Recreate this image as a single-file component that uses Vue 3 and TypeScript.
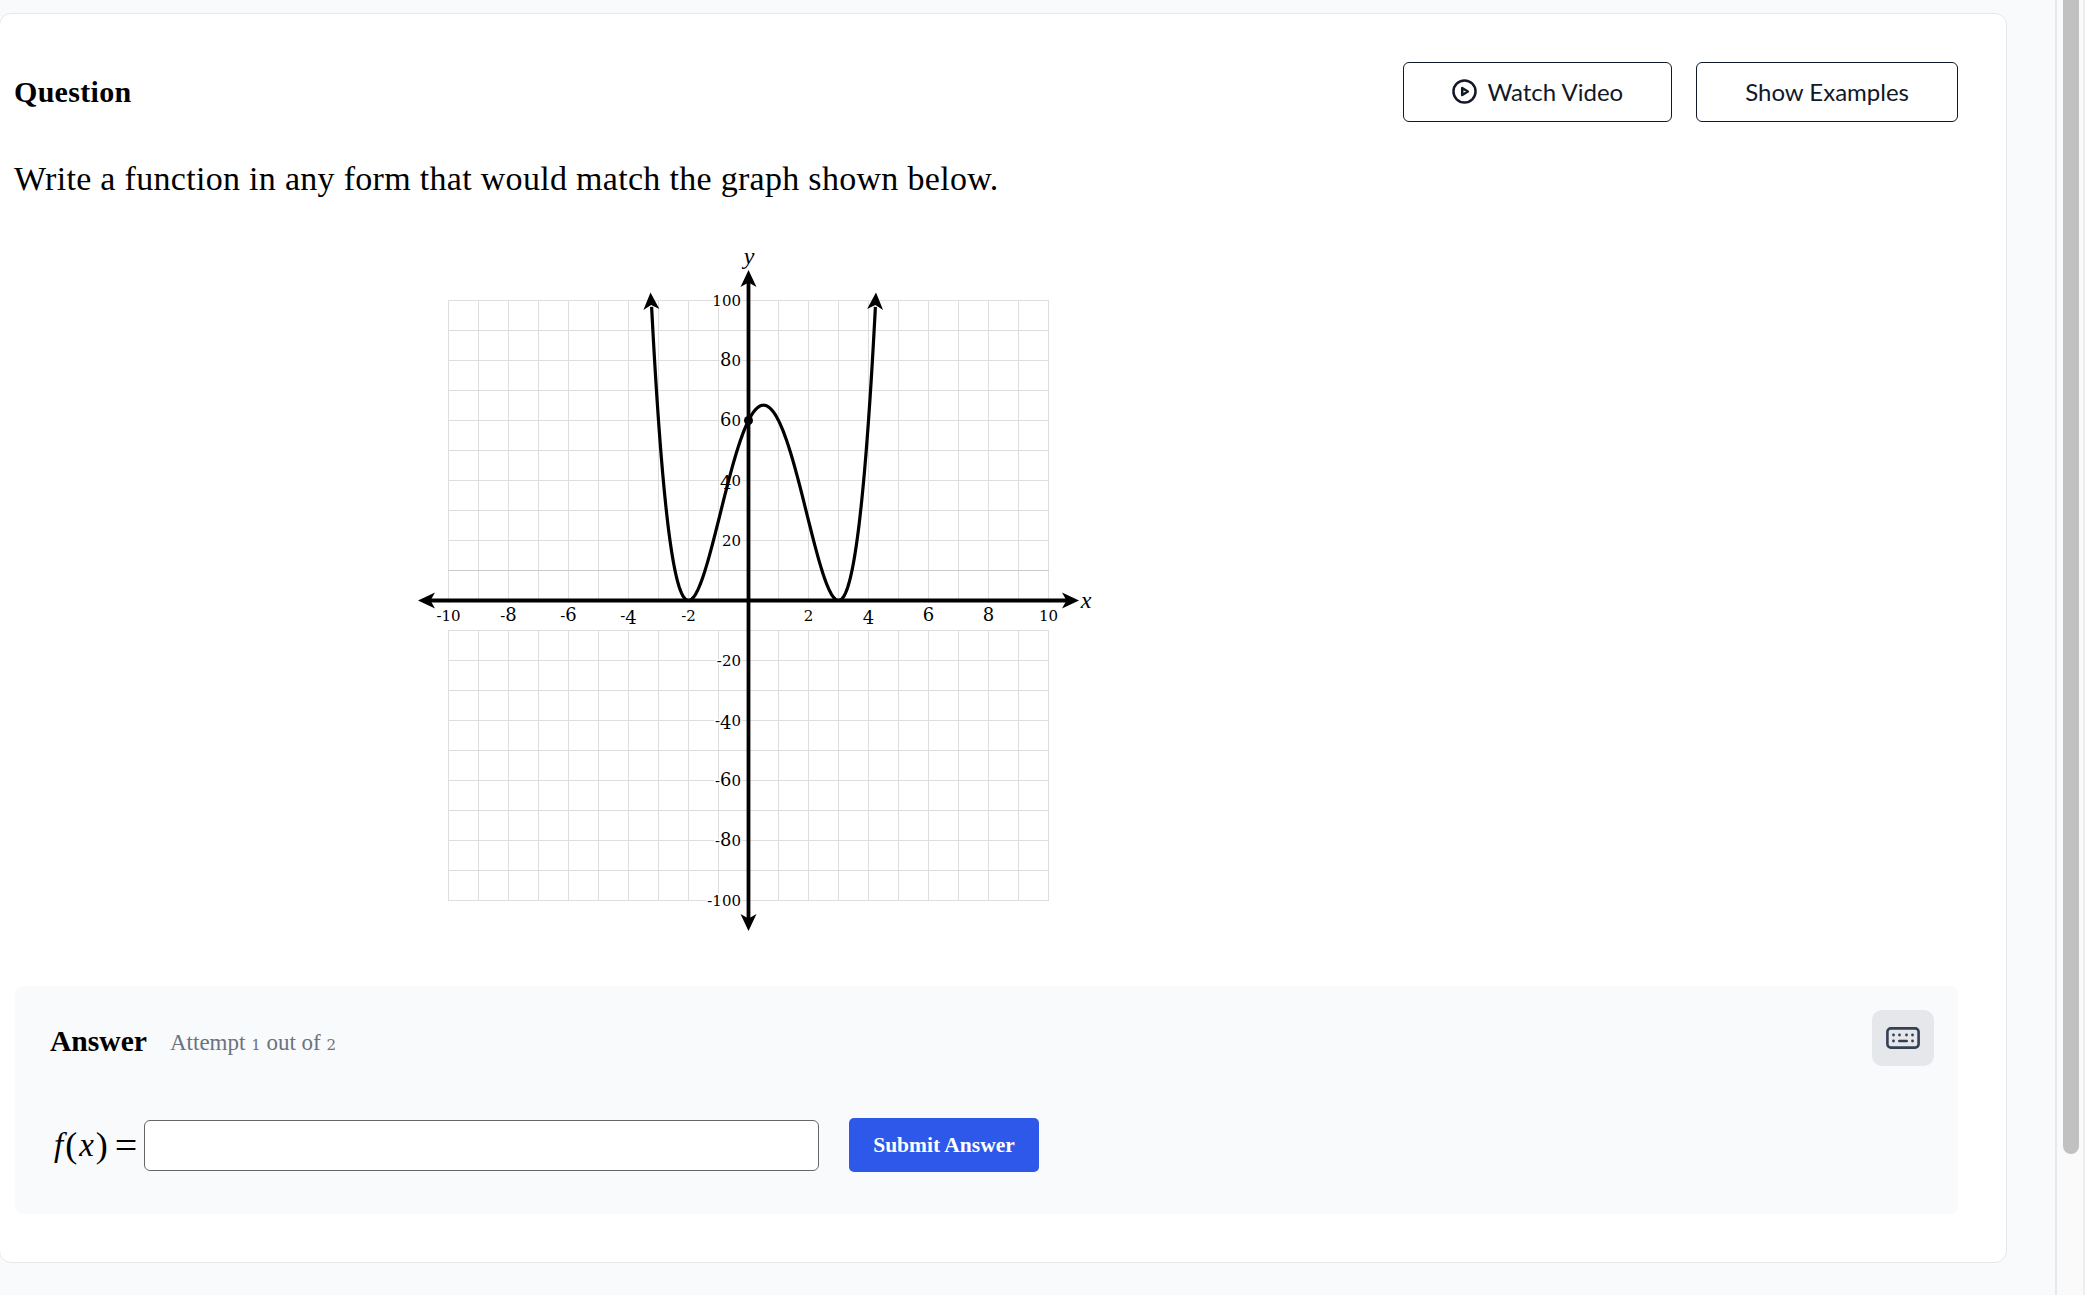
<script setup lang="ts">
interface Digit {
  ch: string;
  cls: string;
  dy: number;
}

const cx = 748.5;
const cy = 600.5;
const unit = 30;

const gridX: number[] = Array.from({ length: 21 }, (_, i) => 448.5 + i * unit);
const gridY: number[] = Array.from({ length: 21 }, (_, i) => 300.5 + i * unit);

const xLabels: number[] = [-10, -8, -6, -4, -2, 2, 4, 6, 8, 10];
const yLabels: number[] = [100, 80, 60, 40, 20, -20, -40, -60, -80, -100];

// the original font has old style figures, so 0 1 2 sit at x-height and 4 hangs down
const toDigits = (label: number): Digit[] => {
  let offset = 0;
  return String(label).split("").map((ch) => {
    const target = ch === "4" ? 3 : 0;
    const dy = target - offset;
    offset = target;
    return { ch, cls: "012-".includes(ch) ? "low" : "high", dy };
  });
};

const f = (x: number): number => (5 / 3) * (x + 2) ** 2 * (x - 3) ** 2;

const curve: string = Array.from({ length: 301 }, (_, i) => {
  const x = -3.23 + (i / 300) * 7.46;
  return `${i === 0 ? "M" : "L"}${(cx + x * unit).toFixed(2)} ${(cy - f(x) * 3).toFixed(2)}`;
}).join(" ");

const arrow = "M0 0L8 17L0 12.5L-8 17Z";
</script>

<template>
  <div class="page">
    <main class="content">
      <section class="card">
        <header class="question-head">
          <h2 class="question-title">Question</h2>
          <div class="actions">
            <button class="btn" type="button">
              <svg class="play" viewBox="0 0 24 24" width="25" height="25" fill="none" stroke="#111827" stroke-width="2.4" stroke-linejoin="round">
                <circle cx="12" cy="12" r="10.6" />
                <path d="M9.8 8.6L15.2 12L9.8 15.4Z" />
              </svg>
              Watch Video
            </button>
            <button class="btn" type="button">Show Examples</button>
          </div>
        </header>

        <p class="prompt">Write a function in any form that would match the graph shown below.</p>

        <svg class="graph" viewBox="400 240 700 700" width="700" height="700">
          <g stroke="#dedede" stroke-width="1">
            <line v-for="x in gridX" :key="'v' + x" :x1="x" y1="300" :x2="x" y2="901" />
            <line v-for="y in gridY" :key="'h' + y" x1="448" :y1="y" x2="1049" :y2="y" />
          </g>
          <line x1="448" y1="570.5" x2="1049" y2="570.5" stroke="#cbcbcb" />
          <rect x="440" y="603" width="620" height="27" fill="#fff" />

          <text v-for="n in xLabels" :key="'x' + n" class="tick" :x="cx + n * unit" y="621" text-anchor="middle">
            <tspan v-for="(d, i) in toDigits(n)" :key="i" :class="d.cls" :dy="d.dy">{{ d.ch }}</tspan>
          </text>
          <text v-for="n in yLabels" :key="'y' + n" class="tick halo" x="741" :y="cy - n * 3 + 5" text-anchor="end">
            <tspan v-for="(d, i) in toDigits(n)" :key="i" :class="d.cls" :dy="d.dy">{{ d.ch }}</tspan>
          </text>

          <text class="axis-name" x="1086" y="608" text-anchor="middle">x</text>
          <text class="axis-name" x="749" y="264" text-anchor="middle">y</text>

          <g stroke="#000" stroke-width="3.8">
            <line :x1="cx" y1="280" :x2="cx" y2="921" />
            <line x1="428" :y1="cy" x2="1069" :y2="cy" />
          </g>
          <path :d="arrow" :transform="`translate(${cx} 270)`" />
          <path :d="arrow" :transform="`translate(${cx} 931) rotate(180)`" />
          <path :d="arrow" :transform="`translate(418 ${cy}) rotate(-90)`" />
          <path :d="arrow" :transform="`translate(1079 ${cy}) rotate(90)`" />

          <path :d="curve" fill="none" stroke="#000" stroke-width="3.2" />
          <path :d="arrow" transform="translate(650.5 292.5) rotate(-3)" />
          <path :d="arrow" transform="translate(876 292.5) rotate(3)" />
          <circle :cx="cx" cy="420.5" r="4.5" />
        </svg>

        <section class="answer">
          <div class="answer-head">
            <div class="answer-titles">
              <h3 class="answer-title">Answer</h3>
              <span class="attempt">Attempt <span class="small-digit">1</span> out of <span class="small-digit">2</span></span>
            </div>
            <button class="keyboard" type="button" aria-label="Keyboard">
              <svg viewBox="0 0 34 22" width="34" height="22" fill="none">
                <rect x="1.4" y="1.4" width="31.2" height="19.2" rx="3.4" stroke="#334155" stroke-width="2.6" />
                <g fill="#334155">
                  <circle cx="7.5" cy="8" r="1.4" />
                  <circle cx="13.5" cy="8" r="1.4" />
                  <circle cx="20.5" cy="8" r="1.4" />
                  <circle cx="26.5" cy="8" r="1.4" />
                  <circle cx="7.5" cy="14" r="1.4" />
                  <rect x="12" y="12.7" width="10" height="2.6" rx="1.2" />
                  <circle cx="26.5" cy="14" r="1.4" />
                </g>
              </svg>
            </button>
          </div>
          <form class="answer-form" @submit.prevent>
            <label class="math" for="answer-input"><i>f</i><span class="paren">(</span><i>x</i><span class="paren">)</span><span class="equals">=</span></label>
            <input id="answer-input" class="answer-input" type="text" />
            <button class="submit" type="submit">Submit Answer</button>
          </form>
        </section>
      </section>
    </main>
    <aside class="scrollbar">
      <div class="thumb"></div>
    </aside>
  </div>
</template>

<style>
html,
body {
  margin: 0;
  overflow: hidden;
}
</style>

<style scoped>
.page {
  display: flex;
  height: 1295px;
  overflow: hidden;
  background: #f9fafb;
  color: #000;
  font-family: "Liberation Serif", serif;
}

.content {
  flex: 1;
  min-width: 0;
  padding: 13px 48px 0 0;
}

.card {
  box-sizing: border-box;
  height: 1250px;
  margin-left: -1px;
  padding: 48px 48px 48px 15px;
  background: #fff;
  border: 1px solid #e5e7eb;
  border-radius: 12px;
}

.question-head {
  display: flex;
  justify-content: space-between;
  align-items: center;
}

.question-title {
  margin: 0 0 0 -1px;
  font-size: 30px;
  font-weight: 700;
  letter-spacing: 0.3px;
}

.actions {
  display: flex;
  gap: 24px;
}

.btn {
  display: flex;
  align-items: center;
  gap: 11px;
  height: 60px;
  padding: 0 48px 1px;
  background: #fff;
  border: 1px solid #111827;
  border-radius: 6px;
  color: #111827;
  font-family: Lato, sans-serif;
  font-size: 24px;
}

.prompt {
  margin: 37px 0 41px -1px;
  font-size: 34px;
  line-height: 40px;
  letter-spacing: 0.3px;
}

.graph {
  display: block;
  margin-left: 385px;
}

.tick {
  font-family: "DejaVu Serif", serif;
}

.halo {
  paint-order: stroke;
  stroke: #fff;
  stroke-width: 3px;
}

.low {
  font-size: 15px;
}

.high {
  font-size: 18px;
}

.axis-name {
  font-family: "Liberation Serif", serif;
  font-style: italic;
  font-size: 24px;
}

.answer {
  box-sizing: border-box;
  height: 228px;
  margin-top: 46px;
  padding: 24px 24px 0 35px;
  background: #f9fafb;
  border-radius: 8px;
}

.answer-head {
  display: flex;
  justify-content: space-between;
  align-items: flex-start;
}

.answer-titles {
  display: flex;
  align-items: center;
  gap: 23px;
  padding-top: 15px;
}

.answer-title {
  margin: 0;
  font-size: 29.6px;
  font-weight: 700;
}

.attempt {
  margin-top: 2px;
  color: #6b7280;
  font-size: 23px;
}

.small-digit {
  font-family: "DejaVu Serif", serif;
  font-size: 15px;
}

.keyboard {
  display: flex;
  align-items: center;
  justify-content: center;
  width: 62px;
  height: 56px;
  padding: 0;
  background: #e5e7eb;
  border: none;
  border-radius: 10px;
}

.answer-form {
  display: flex;
  align-items: flex-start;
  margin-top: 52px;
}

.math {
  display: flex;
  align-items: center;
  width: 94px;
  height: 54px;
  padding-left: 2px;
  box-sizing: border-box;
  font-size: 33px;
}

.math i {
  padding: 0 2px;
}

.paren {
  font-size: 36px;
}

.equals {
  margin-left: 7px;
  font-size: 40px;
}

.answer-input {
  box-sizing: border-box;
  width: 675px;
  height: 51px;
  margin: 2px 0 0;
  background: #fff;
  border: 1.5px solid #666;
  border-radius: 6px;
}

.submit {
  width: 190px;
  height: 54px;
  margin-left: 30px;
  background: #2d58ea;
  border: none;
  border-radius: 5px;
  color: #fff;
  font-family: "Liberation Serif", serif;
  font-size: 21.5px;
  font-weight: 700;
}

.scrollbar {
  box-sizing: border-box;
  width: 30px;
  padding: 0 4px 0 6px;
  background: #fafafa;
  border-left: 2px solid #e8e8e8;
  border-right: 2px solid #eeeeee;
}

.thumb {
  width: 16px;
  height: 1154px;
  background: #c1c1c1;
  border-radius: 0 0 8px 8px;
}
</style>
